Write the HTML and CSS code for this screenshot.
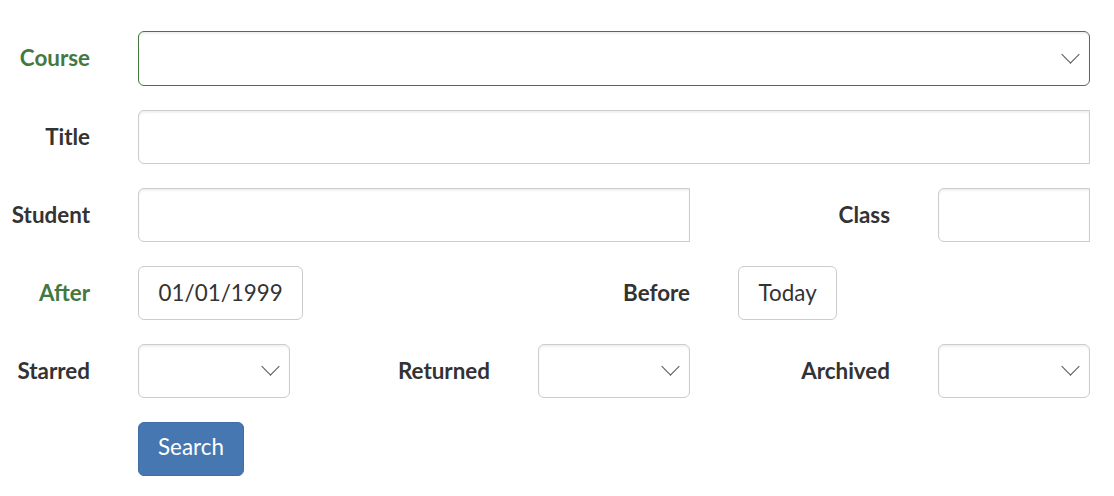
FILE: index.html
```html
<!DOCTYPE html>
<html>
<head>
<meta charset="utf-8">
<link rel="stylesheet" href="styles.css">
</head>
<body>
<form class="search-form">
  <label class="lbl lbl-success c1">Course</label>
  <div class="select select-success span-wide"><span class="chev"></span></div>

  <label class="lbl c1">Title</label>
  <div class="input input-cut span-wide"></div>

  <label class="lbl c1">Student</label>
  <div class="input input-cut span-mid"></div>
  <label class="lbl c5">Class</label>
  <div class="input input-cut c6"></div>

  <label class="lbl lbl-success c1">After</label>
  <div class="input input-text c2 date">01/01/1999</div>
  <label class="lbl c4">Before</label>
  <div class="input input-text c5 today">Today</div>

  <label class="lbl c1">Starred</label>
  <div class="select c2"><span class="chev"></span></div>
  <label class="lbl c3">Returned</label>
  <div class="select c4"><span class="chev"></span></div>
  <label class="lbl c5">Archived</label>
  <div class="select c6"><span class="chev"></span></div>

  <button type="button" class="btn c2">Search</button>
</form>
</body>
</html>
```

FILE: styles.css
```css
html, body {
  margin: 0;
  padding: 0;
  background: #fff;
}
body {
  font-family: Lato, "Liberation Sans", sans-serif;
  color: #333;
}
.search-form {
  display: grid;
  grid-template-columns: 90px 152px 152px 152px 152px 152px;
  column-gap: 48px;
  row-gap: 24px;
  grid-template-rows: 55px repeat(5, 54px);
  padding-top: 31px;
}
.lbl {
  font-size: 22.4px;
  font-weight: 700;
  text-align: right;
  align-self: center;
  white-space: nowrap;
  justify-self: end;
  margin-top: -2px;
}
.lbl-success { color: #45783f; }
.c1 { grid-column: 1; }
.c2 { grid-column: 2; }
.c3 { grid-column: 3; }
.c4 { grid-column: 4; }
.c5 { grid-column: 5; }
.c6 { grid-column: 6; }
.span-wide { grid-column: 2 / 7; }
.span-mid { grid-column: 2 / 5; }

.input, .select {
  box-sizing: border-box;
  height: 100%;
  border: 1px solid #ccc;
  border-radius: 6px;
  background: #fff;
  box-shadow: inset 0 2px 2px rgba(0,0,0,0.06);
  position: relative;
}
.input-cut {
  border-radius: 6px 0 0 6px;
}
.input-text {
  font-size: 22.4px;
  display: flex;
  align-items: center;
  padding: 0 19.6px 2px;
  justify-self: start;
  white-space: nowrap;
  box-shadow: none;
}
.select-success {
  border-color: #45783f;
}
.chev {
  position: absolute;
  right: 12px;
  top: 50%;
  width: 12px;
  height: 12px;
  margin-top: -11px;
  border-right: 1.5px solid #555;
  border-bottom: 1.5px solid #555;
  transform: rotate(45deg);
}
.btn {
  grid-column: 2;
  justify-self: start;
  height: 100%;
  box-sizing: border-box;
  width: 106px;
  background: #4677b0;
  border: 1px solid #3f6ea6;
  border-radius: 6px;
  color: #fff;
  font-family: Lato, "Liberation Sans", sans-serif;
  font-size: 22.4px;
  padding: 0 0 5px;
}
```
